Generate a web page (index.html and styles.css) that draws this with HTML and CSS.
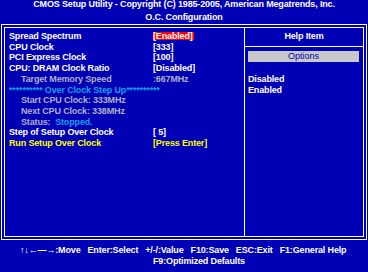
FILE: index.html
```html
<!DOCTYPE html>
<html lang="en">
<head>
  <meta charset="UTF-8" />
  <title>O.C. Configuration</title>
  <link rel="stylesheet" href="styles.css">
</head>
<body>
  <div class="screen">
    <header class="title">
      <div>CMOS Setup Utility - Copyright (C) 1985-2005, American Megatrends, Inc.</div>
      <div>O.C. Configuration</div>
    </header>

    <div class="frame">
      <div class="frame-inner">
        <div class="settings">
          <div class="row"><span class="label">Spread Spectrum</span><span class="value"><span class="selected">[Enabled]</span></span></div>
          <div class="row"><span class="label">CPU Clock</span><span class="value">[333]</span></div>
          <div class="row"><span class="label">PCI Express Clock</span><span class="value">[100]</span></div>
          <div class="row"><span class="label">CPU: DRAM Clock Ratio</span><span class="value">[Disabled]</span></div>
          <div class="row dim"><span class="label sub">Target Memory Speed</span><span class="value">:667MHz</span></div>
          <div class="row note">********** Over Clock Step Up**********</div>
          <div class="row dim"><span class="label sub">Start CPU Clock: 333MHz</span></div>
          <div class="row dim"><span class="label sub">Next CPU Clock: 338MHz</span></div>
          <div class="row dim"><span class="label sub">Status:&nbsp; <span class="status">Stopped.</span></span></div>
          <div class="row"><span class="label">Step of Setup Over Clock</span><span class="value">[ 5]</span></div>
          <div class="row run"><span class="label">Run Setup Over Clock</span><span class="value">[Press Enter]</span></div>
        </div>

        <div class="help">
          <div class="help-title">Help Item</div>
          <div class="options">Options</div>
          <div class="option-list">
            <div>Disabled</div>
            <div>Enabled</div>
          </div>
        </div>
      </div>
    </div>

    <footer class="keys">
      <div class="keys-line">
        <span>↑↓←—→:Move</span>
        <span>Enter:Select</span>
        <span>+/-/:Value</span>
        <span>F10:Save</span>
        <span>ESC:Exit</span>
        <span>F1:General Help</span>
      </div>
      <div class="keys-line second">
        <span>F9:Optimized Defaults</span>
      </div>
    </footer>
  </div>
</body>
</html>
```

FILE: styles.css
```css
/* Reset */
* {
  margin: 0;
  padding: 0;
  box-sizing: border-box;
}

body {
  background: #0000b4;
  color: #fff;
  font-family: 'Liberation Sans', Arial, sans-serif;
  font-size: 9px;
  font-weight: bold;
  letter-spacing: -0.15px;
  line-height: 10.7px;
  overflow: hidden;
}

.screen {
  width: 368px;
  height: 272px;
}

/* Title */
.title {
  height: 24px;
  text-align: center;
  line-height: 12.5px;
  margin-top: -2px;
}

/* Double frame */
.frame {
  margin-left: 1px;
  width: 366px;
  height: 216px;
  border: 1px solid #fff;
  padding: 2px;
  margin-top: 2px;
}

.frame-inner {
  height: 100%;
  border: 1px solid #fff;
  display: flex;
}

/* Settings list */
.settings {
  width: 239px;
  padding: 3px 0 0 4px;
}

.row {
  display: flex;
  white-space: pre;
}

.label {
  width: 144px;
}

.label.sub {
  padding-left: 12px;
}

.dim {
  color: #b0b0c8;
}

.note,
.status {
  color: #10a0e8;
}

.run {
  color: #ffff00;
}

.selected {
  display: inline-block;
  background: #ff0000;
  color: #fff;
  height: 8px;
  line-height: 8px;
  margin-top: 1px;
  padding-right: 1px;
}

/* Help panel */
.help {
  flex: 1;
  border-left: 1px solid #fff;
}

.help-title {
  height: 19px;
  padding-top: 3px;
  text-align: center;
  border-bottom: 1px solid #fff;
}

.options {
  margin: 4px 4px 0 3px;
  height: 11px;
  line-height: 11px;
  background: #c8c8c8;
  color: #0000b4;
  font-weight: normal;
  letter-spacing: 0;
  text-align: center;
}

.option-list {
  margin-top: 12px;
  padding-left: 3px;
}

/* Key help */
.keys {
  padding-top: 5px;
}

.keys-line {
  display: flex;
  gap: 7px;
  padding-left: 20px;
  white-space: pre;
}

.keys-line.second {
  padding-left: 153px;
}
```
